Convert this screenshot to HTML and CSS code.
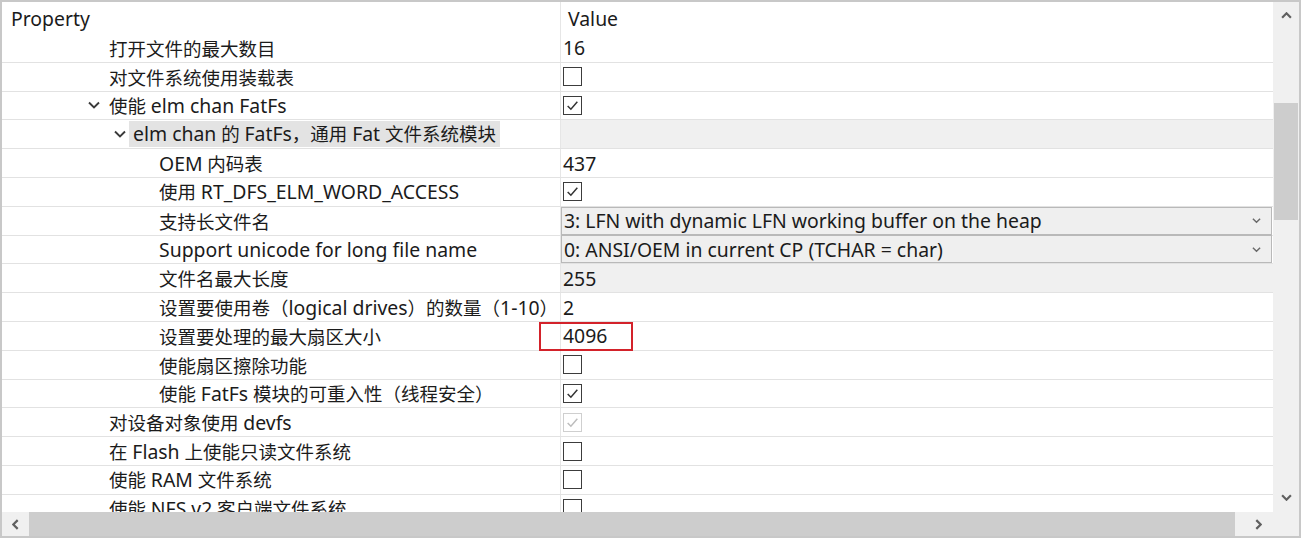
FILE: index.html
```html
<!DOCTYPE html>
<html lang="zh-CN">
<head>
<meta charset="utf-8">
<title>Property grid</title>
<link rel="stylesheet" href="styles.css">
</head>
<body>
<div class="window">
  <div class="content">
    <div class="head">
      <div class="hcell label-h">Property</div>
      <div class="hcell value-h">Value</div>
    </div>
    <div class="row"><div class="lab l1"><span class="t">打开文件的最大数目</span></div><div class="val">16</div></div>
    <div class="row"><div class="lab l1"><span class="t">对文件系统使用装载表</span></div><div class="val"><span class="cb"></span></div></div>
    <div class="row"><div class="lab l1"><svg class="tw" viewBox="0 0 12 8"><polyline points="1,1.5 6,6.5 11,1.5"/></svg><span class="t">使能 <span class="en">elm chan FatFs</span></span></div><div class="val"><span class="cb on"><svg viewBox="0 0 14 14"><polyline points="2.5,7.5 5.5,10.5 11.5,3.5"/></svg></span></div></div>
    <div class="row"><div class="lab l2"><svg class="tw" viewBox="0 0 12 8"><polyline points="1,1.5 6,6.5 11,1.5"/></svg><span class="t sel"><span class="en">elm chan</span> 的 <span class="en">FatFs</span>，通用 <span class="en">Fat</span> 文件系统模块</span></div><div class="val gray"></div></div>
    <div class="row"><div class="lab l3"><span class="t"><span class="en">OEM</span> 内码表</span></div><div class="val">437</div></div>
    <div class="row"><div class="lab l3"><span class="t">使用 <span class="en">RT_DFS_ELM_WORD_ACCESS</span></span></div><div class="val"><span class="cb on"><svg viewBox="0 0 14 14"><polyline points="2.5,7.5 5.5,10.5 11.5,3.5"/></svg></span></div></div>
    <div class="row"><div class="lab l3"><span class="t">支持长文件名</span></div><div class="val"><div class="combo"><span>3: LFN with dynamic LFN working buffer on the heap</span><svg class="dd" viewBox="0 0 10 7"><polyline points="1,1.5 5,5.5 9,1.5"/></svg></div></div></div>
    <div class="row"><div class="lab l3"><span class="t"><span class="en">Support unicode for long file name</span></span></div><div class="val"><div class="combo"><span>0: ANSI/OEM in current CP (TCHAR = char)</span><svg class="dd" viewBox="0 0 10 7"><polyline points="1,1.5 5,5.5 9,1.5"/></svg></div></div></div>
    <div class="row"><div class="lab l3"><span class="t">文件名最大长度</span></div><div class="val gray">255</div></div>
    <div class="row"><div class="lab l3"><span class="t">设置要使用卷（<span class="en">logical drives</span>）的数量（<span class="en">1-10</span>）</span></div><div class="val">2</div></div>
    <div class="row"><div class="lab l3"><span class="t">设置要处理的最大扇区大小</span></div><div class="val">4096<span class="redbox"></span></div></div>
    <div class="row"><div class="lab l3"><span class="t">使能扇区擦除功能</span></div><div class="val"><span class="cb"></span></div></div>
    <div class="row"><div class="lab l3"><span class="t">使能 <span class="en">FatFs</span> 模块的可重入性（线程安全）</span></div><div class="val"><span class="cb on"><svg viewBox="0 0 14 14"><polyline points="2.5,7.5 5.5,10.5 11.5,3.5"/></svg></span></div></div>
    <div class="row"><div class="lab l1"><span class="t">对设备对象使用 <span class="en">devfs</span></span></div><div class="val"><span class="cb on dis"><svg viewBox="0 0 14 14"><polyline points="2.5,7.5 5.5,10.5 11.5,3.5"/></svg></span></div></div>
    <div class="row"><div class="lab l1"><span class="t">在 <span class="en">Flash</span> 上使能只读文件系统</span></div><div class="val"><span class="cb"></span></div></div>
    <div class="row"><div class="lab l1"><span class="t">使能 <span class="en">RAM</span> 文件系统</span></div><div class="val"><span class="cb"></span></div></div>
    <div class="row"><div class="lab l1"><span class="t">使能 <span class="en">NFS v2</span> 客户端文件系统</span></div><div class="val"><span class="cb"></span></div></div>
  </div>
  <div class="vscroll">
    <div class="sbtn up"><svg viewBox="0 0 10 6"><polyline points="1,5 5,1 9,5"/></svg></div>
    <div class="vtrack"><div class="vthumb"></div></div>
    <div class="sbtn down"><svg viewBox="0 0 10 6"><polyline points="1,1 5,5 9,1"/></svg></div>
  </div>
  <div class="hscroll">
    <div class="hbtn left"><svg viewBox="0 0 6 10"><polyline points="5,1 1,5 5,9"/></svg></div>
    <div class="htrack"><div class="hthumb"></div></div>
    <div class="hbtn right"><svg viewBox="0 0 6 10"><polyline points="1,1 5,5 1,9"/></svg></div>
  </div>
  <div class="corner"></div>
</div>
</body>
</html>
```
FILE: styles.css
```css
html, body {
  margin: 0;
  padding: 0;
  background: #ffffff;
}

.window {
  width: 1301px;
  height: 538px;
  box-sizing: border-box;
  border: 2px solid #c8c8c8;
  display: grid;
  grid-template-columns: 1fr 26px;
  grid-template-rows: 1fr 24px;
  font-family: "Noto Sans", "Noto Sans CJK SC", sans-serif;
  font-size: 18.5px;
  color: #1b1b1b;
  overflow: hidden;
  background: #ffffff;
}

.en {
  font-size: 1.05em;
}

.content {
  overflow: hidden;
  display: flex;
  flex-direction: column;
}

.head {
  display: flex;
  height: 32px;
  flex: none;
}

.hcell {
  display: flex;
  align-items: center;
  font-size: 19.4px;
}

.label-h {
  width: 559px;
  padding-left: 9px;
  box-sizing: border-box;
  border-right: 1px solid #e6e6e6;
}

.value-h {
  padding-left: 7px;
}

.row {
  display: flex;
  height: 28.8px;
  flex: none;
  box-sizing: border-box;
  border-bottom: 1px solid #e2e2e2;
}

.lab {
  width: 559px;
  flex: none;
  box-sizing: border-box;
  border-right: 1px solid #e6e6e6;
  display: flex;
  align-items: center;
  white-space: nowrap;
  overflow: hidden;
}

.t {
  white-space: nowrap;
}

.l1 { padding-left: 107px; }
.l2 { padding-left: 112px; }
.l3 { padding-left: 157px; }

.l1 .tw { margin-left: -21px; }

.tw {
  width: 12px;
  height: 8px;
  margin-right: 9px;
  fill: none;
  stroke: #3a3a3a;
  stroke-width: 1.9;
  flex: none;
}

.sel {
  background: #e3e3e3;
  padding: 0 4px;
  margin-left: -6px;
  height: 26px;
  line-height: 26px;
}

.val {
  flex: 1;
  display: flex;
  align-items: center;
  padding-left: 2px;
  position: relative;
  font-size: 19.4px;
}

.val.gray {
  background: #f0f0f0;
}

.cb {
  width: 17px;
  height: 17px;
  border: 1.5px solid #3c3c3c;
  box-sizing: content-box;
  display: flex;
  align-items: center;
  justify-content: center;
  background: #ffffff;
}

.cb svg {
  width: 15px;
  height: 15px;
  fill: none;
  stroke: #333333;
  stroke-width: 1.4;
}

.cb.dis {
  border-color: #cfcfcf;
}

.cb.dis svg {
  stroke: #bdbdbd;
}

.combo {
  flex: 1;
  height: 28px;
  margin-left: -2px;
  margin-right: 1px;
  box-sizing: border-box;
  border: 1px solid #b9b9b9;
  background: #efefef;
  display: flex;
  align-items: center;
  justify-content: space-between;
  padding-left: 2px;
  padding-right: 10px;
}

.dd {
  width: 9px;
  height: 7px;
  fill: none;
  stroke: #6a6a6a;
  stroke-width: 1.6;
}

.redbox {
  position: absolute;
  left: -22px;
  top: 0;
  width: 94px;
  height: 29px;
  box-sizing: border-box;
  border: 2px solid #d3222a;
}

.vscroll {
  background: #f0f0f0;
  display: flex;
  flex-direction: column;
}

.sbtn {
  display: flex;
  align-items: center;
  justify-content: center;
  flex: none;
}

.sbtn.up { height: 26px; }
.sbtn.down { height: 30px; }

.sbtn svg {
  width: 11px;
  height: 7px;
  fill: none;
  stroke: #606060;
  stroke-width: 2;
}

.vtrack {
  flex: 1;
  padding: 0 1px;
}

.vthumb {
  margin-top: 75px;
  height: 117px;
  background: #cdcdcd;
}

.hscroll {
  background: #f0f0f0;
  display: flex;
}

.hbtn {
  display: flex;
  align-items: center;
  justify-content: center;
  flex: none;
}

.hbtn.left { width: 27px; }
.hbtn.right { width: 30px; }

.hbtn svg {
  width: 7px;
  height: 11px;
  fill: none;
  stroke: #606060;
  stroke-width: 2;
}

.htrack {
  flex: 1;
}

.hthumb {
  width: 1206px;
  height: 100%;
  background: #cdcdcd;
}

.corner {
  background: #f0f0f0;
}
```
